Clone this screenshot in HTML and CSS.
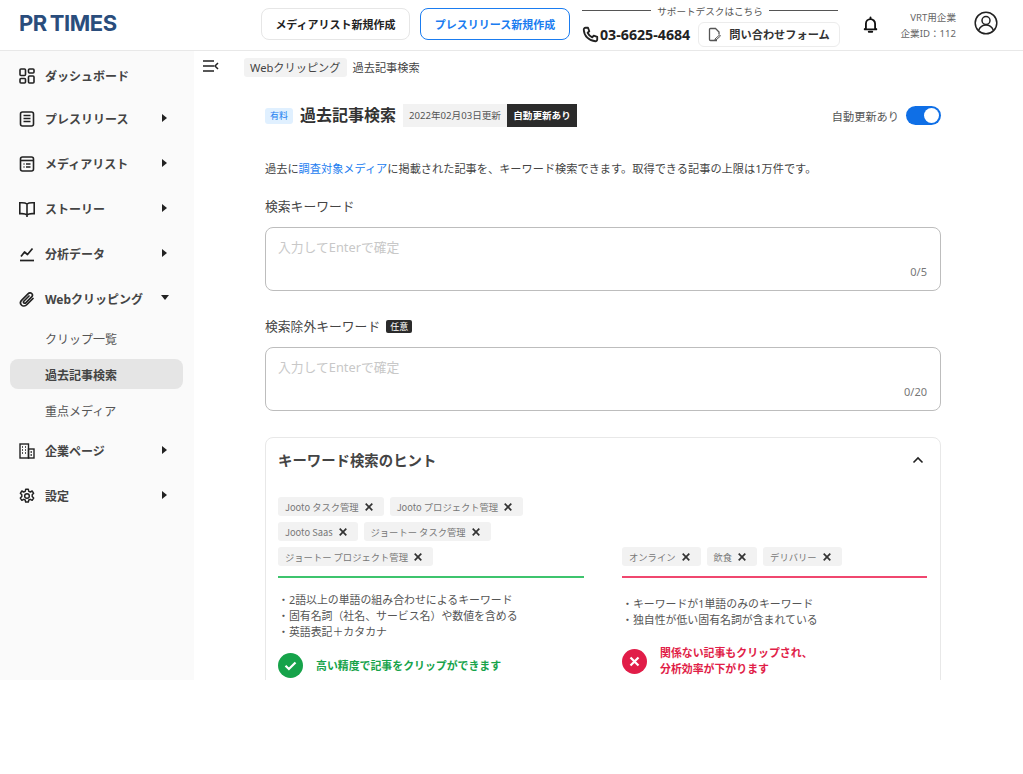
FILE: index.html
```html
<!DOCTYPE html>
<html lang="ja">
<head>
    <meta charset="UTF-8">
    <title>過去記事検索</title>
    <link rel="stylesheet" href="styles.css">
</head>
<body>
<div class="app">
    <header class="header">
        <div class="logo">PR TIMES</div>
        <a class="head-btn">メディアリスト新規作成</a>
        <a class="head-btn head-btn-blue">プレスリリース新規作成</a>
        <div class="support">
            <div class="support-title"><span>サポートデスクはこちら</span></div>
            <div class="support-row">
                <div class="tel">
                    <svg width="17" height="17" viewBox="0 0 24 24" fill="none" stroke="#222" stroke-width="2.6" stroke-linecap="round" stroke-linejoin="round"><path d="M5 2.5h3.5l1.8 5-2.4 2a14 14 0 0 0 6.6 6.6l2-2.4 5 1.8V19a2.5 2.5 0 0 1-2.7 2.5A17 17 0 0 1 2.5 5.2 2.5 2.5 0 0 1 5 2.5z"/></svg>
                    <span>03-6625-4684</span>
                </div>
                <a class="form-btn">
                    <svg width="14" height="15" viewBox="0 0 14 15" fill="none" stroke="#555" stroke-width="1.3"><path d="M9 13.5H2.5a1 1 0 0 1-1-1v-10a1 1 0 0 1 1-1h5l3.5 3.5v2.5"/><path d="M7 12l4.5-4 1 1-4.5 4H7z" stroke-width="1"/></svg>
                    問い合わせフォーム
                </a>
            </div>
        </div>
        <svg class="bell" width="15" height="18" viewBox="0 0 18 20" fill="none" stroke="#111" stroke-width="2.2" stroke-linejoin="round"><path d="M3.5 14V8.5a5.5 5.5 0 0 1 11 0V14l1.5 1.2H2z"/><path d="M7 18h4" stroke-width="2.4" stroke-linecap="round"/><path d="M9 1v2" stroke-linecap="round"/></svg>
        <div class="company">
            <div>VRT用企業</div>
            <div>企業ID：112</div>
        </div>
        <svg class="user" width="24" height="24" viewBox="0 0 24 24" fill="none" stroke="#222" stroke-width="1.5"><circle cx="12" cy="12" r="10.8"/><circle cx="12" cy="9.5" r="4"/><path d="M4.5 19.5c1.5-3.5 4-5.5 7.5-5.5s6 2 7.5 5.5"/></svg>
    </header>

    <div class="body">
        <nav class="sidebar">
            <a class="nav-item nav-first">
                <svg class="nav-icon" viewBox="0 0 16 16" fill="none" stroke="#222" stroke-width="1.6"><rect x="1" y="1" width="5.5" height="6.5" rx="1"/><rect x="9.5" y="1" width="5.5" height="4" rx="1"/><rect x="1" y="10.5" width="5.5" height="4.5" rx="1"/><rect x="9.5" y="8" width="5.5" height="7" rx="1"/></svg>
                ダッシュボード
            </a>
            <a class="nav-item nav-arrow">
                <svg class="nav-icon" viewBox="0 0 16 16" fill="none" stroke="#222" stroke-width="1.6"><rect x="1.5" y="1" width="13" height="14" rx="2"/><path d="M4.5 4.5h7M4.5 7.5h7M4.5 10.5h7" stroke-width="1.7"/></svg>
                プレスリリース
            </a>
            <a class="nav-item nav-arrow">
                <svg class="nav-icon" viewBox="0 0 16 16" fill="none" stroke="#222" stroke-width="1.6"><rect x="1.5" y="1" width="13" height="14" rx="2"/><path d="M1.5 4.5h13"/><path d="M4.5 8h1M7 8h4.5M4.5 11h1M7 11h4.5" stroke-width="1.4"/></svg>
                メディアリスト
            </a>
            <a class="nav-item nav-arrow">
                <svg class="nav-icon" viewBox="0 0 16 16" fill="none" stroke="#222" stroke-width="1.6"><path d="M8 3C6.5 1.8 4 1.5.8 1.8v10.9c3.2-.3 5.700 0 7.200 1.300 1.500-1.300 4-1.600 7.200-1.300V1.800C12 1.500 9.500 1.800 8 3zM8 3v13"/></svg>
                ストーリー
            </a>
            <a class="nav-item nav-arrow">
                <svg class="nav-icon" viewBox="0 0 16 16" fill="none" stroke="#222" stroke-width="1.7"><path d="M1 14.5h14"/><path d="M2 10.5L5.5 6l3 2.5 5-6" stroke-linejoin="round"/></svg>
                分析データ
            </a>
            <a class="nav-item nav-down">
                <svg class="nav-icon" viewBox="0 0 16 16" fill="none" stroke="#222" stroke-width="1.7" stroke-linecap="round"><path d="M14 7.5l-6 6c-1.8 1.8-4.3 1.8-5.6.5S1.300 10.500 3 8.800l6-6c1.200-1.200 2.800-1.200 3.700-.3s.9 2.500-.3 3.700L6.800 11.800c-.6.600-1.400.6-1.900.1s-.5-1.300.1-1.900L10 5"/></svg>
                Webクリッピング
            </a>
            <a class="sub-item sub-first">クリップ一覧</a>
            <a class="sub-item sub-active">過去記事検索</a>
            <a class="sub-item sub-last">重点メディア</a>
            <a class="nav-item nav-arrow">
                <svg class="nav-icon" viewBox="0 0 16 16" fill="none" stroke="#222" stroke-width="1.4"><rect x="1" y="1" width="8.5" height="14"/><rect x="9.5" y="6" width="5.5" height="9"/><path d="M3 4h1M6 4h1M3 7h1M6 7h1M3 10h1M6 10h1M11.5 9H13M11.5 12H13" stroke-width="1.5"/></svg>
                企業ページ
            </a>
            <a class="nav-item nav-arrow">
                <svg class="nav-icon" viewBox="0 0 24 24" fill="none" stroke="#222" stroke-width="2.2" stroke-linejoin="round"><circle cx="12" cy="12" r="3.5"/><path d="M10 2h4l.7 3 2.3 1 2.7-1.5L22 8l-2.200 2.200v2.600L22 15l-2.300 3.500-2.700-1.500-2.300 1-.7 3h-4l-.7-3-2.300-1-2.700 1.500L2 15l2.200-2.200v-2.600L2 8l2.300-3.500L7 6l2.300-1z"/></svg>
                設定
            </a>
        </nav>

        <main class="main">
            <div class="crumbs">
                <svg class="menu-close" width="16" height="12" viewBox="0 0 16 12" fill="none" stroke="#222" stroke-width="1.5"><path d="M0 1h11M0 6h11M0 11h11"/><path d="M15 3l-3 3 3 3"/></svg>
                <span class="crumb-chip">Webクリッピング</span>
                <span class="crumb-now">過去記事検索</span>
            </div>

            <div class="content">
                <div class="title-row">
                    <span class="paid">有料</span>
                    <h1 class="title">過去記事検索</h1>
                    <span class="date-chip">2022年02月03日更新</span>
                    <span class="auto-chip">自動更新あり</span>
                    <span class="toggle-label">自動更新あり</span>
                    <span class="toggle"></span>
                </div>

                <p class="lead">過去に<a class="link">調査対象メディア</a>に掲載された記事を、キーワード検索できます。取得できる記事の上限は1万件です。</p>

                <div class="field-label">検索キーワード</div>
                <div class="input-box">
                    <span class="placeholder">入力してEnterで確定</span>
                    <span class="count">0/5</span>
                </div>

                <div class="field-label field-second">検索除外キーワード<span class="optional">任意</span></div>
                <div class="input-box">
                    <span class="placeholder">入力してEnterで確定</span>
                    <span class="count">0/20</span>
                </div>

                <section class="hint">
                    <div class="hint-head">
                        <h2>キーワード検索のヒント</h2>
                        <svg width="12" height="8" viewBox="0 0 12 8" fill="none" stroke="#222" stroke-width="1.6"><path d="M1.5 6.5L6 2l4.5 4.5"/></svg>
                    </div>
                    <div class="hint-cols">
                        <div class="hint-col">
                            <div class="tags">
                                <span class="tag">Jooto タスク管理<svg class="x" viewBox="0 0 8 8"><path d="M.7.7l6.6 6.6M7.3.7L.7 7.3"/></svg></span>
                                <span class="tag">Jooto プロジェクト管理<svg class="x" viewBox="0 0 8 8"><path d="M.7.7l6.6 6.6M7.3.7L.7 7.3"/></svg></span>
                                <span class="tag">Jooto Saas<svg class="x" viewBox="0 0 8 8"><path d="M.7.7l6.6 6.6M7.3.7L.7 7.3"/></svg></span>
                                <span class="tag">ジョートー タスク管理<svg class="x" viewBox="0 0 8 8"><path d="M.7.7l6.6 6.6M7.3.7L.7 7.3"/></svg></span>
                                <span class="tag">ジョートー プロジェクト管理<svg class="x" viewBox="0 0 8 8"><path d="M.7.7l6.6 6.6M7.3.7L.7 7.3"/></svg></span>
                            </div>
                            <ul class="points points-good">
                                <li>2語以上の単語の組み合わせによるキーワード</li>
                                <li>固有名詞（社名、サービス名）や数値を含める</li>
                                <li>英語表記＋カタカナ</li>
                            </ul>
                            <div class="result result-good">
                                <svg width="25" height="25" viewBox="0 0 25 25"><circle cx="12.5" cy="12.5" r="12.5" fill="#16a34a"/><path d="M7.5 12.8l3.400 3.200 6.600-6.500" fill="none" stroke="#fff" stroke-width="2.2"/></svg>
                                <span>高い精度で記事をクリップができます</span>
                            </div>
                        </div>
                        <div class="hint-col">
                            <div class="tags tags-bad">
                                <span class="tag">オンライン<svg class="x" viewBox="0 0 8 8"><path d="M.7.7l6.6 6.6M7.3.7L.7 7.3"/></svg></span>
                                <span class="tag">飲食<svg class="x" viewBox="0 0 8 8"><path d="M.7.7l6.6 6.6M7.3.7L.7 7.3"/></svg></span>
                                <span class="tag">デリバリー<svg class="x" viewBox="0 0 8 8"><path d="M.7.7l6.6 6.6M7.3.7L.7 7.3"/></svg></span>
                            </div>
                            <ul class="points points-bad">
                                <li>キーワードが1単語のみのキーワード</li>
                                <li>独自性が低い固有名詞が含まれている</li>
                            </ul>
                            <div class="result result-bad">
                                <svg width="25" height="25" viewBox="0 0 25 25"><circle cx="12.5" cy="12.5" r="12.5" fill="#e11d48"/><path d="M8.5 8.5l8 8M16.5 8.5l-8 8" fill="none" stroke="#fff" stroke-width="2.2"/></svg>
                                <span>関係ない記事もクリップされ、<br>分析効率が下がります</span>
                            </div>
                        </div>
                    </div>
                </section>
            </div>
        </main>
    </div>
</div>
</body>
</html>
```

FILE: styles.css
```css
* {
    box-sizing: border-box;
}
html, body {
    margin: 0;
    background-color: #fff;
}
body {
    font-family: "Noto Sans", "Noto Sans CJK JP", sans-serif;
    color: #444;
}
.app {
    height: 680px;
    overflow: hidden;
    display: flex;
    flex-direction: column;
}

/* header */
.header {
    height: 51px;
    flex: none;
    display: flex;
    align-items: center;
    border-bottom: 1px solid #e8e8e8;
    padding-left: 19px;
}
.logo {
    width: 242px;
    font-family: "Inter", sans-serif;
    font-size: 22px;
    font-weight: 700;
    letter-spacing: -0.4px;
    word-spacing: -2px;
    color: #2a4d7c;
    margin-bottom: 5px;
}
.head-btn {
    width: 149px;
    height: 32px;
    display: flex;
    align-items: center;
    justify-content: center;
    border: 1px solid #e6e6e6;
    border-radius: 8px;
    font-size: 11px;
    font-weight: 700;
    color: #222;
    margin-right: 10px;
    margin-bottom: 3px;
}
.head-btn-blue {
    width: 150px;
    border-color: #1a7cf0;
    color: #1a7cf0;
    margin-right: 12px;
}
.support {
    width: 258px;
    display: flex;
    flex-direction: column;
    margin-top: -1px;
}
.support-title {
    width: 256px;
    height: 16px;
    display: flex;
    align-items: center;
    font-size: 9.6px;
    color: #555;
}
.support-title::before, .support-title::after {
    content: "";
    flex: 1;
    border-top: 1px solid #555;
}
.support-title span {
    padding: 0 6px;
}
.support-row {
    display: flex;
    align-items: center;
    justify-content: space-between;
    height: 25px;
    margin-top: 3px;
}
.tel {
    display: flex;
    align-items: center;
    font-size: 14.2px;
    font-weight: 700;
    color: #222;
    gap: 1px;
}
.form-btn {
    width: 142px;
    height: 25px;
    display: flex;
    align-items: center;
    justify-content: center;
    gap: 7px;
    border: 1px solid #ececec;
    border-radius: 6px;
    font-size: 11.2px;
    font-weight: 700;
    color: #333;
}
.bell {
    margin-left: 23px;
}
.company {
    width: 70px;
    margin-left: 8px;
    text-align: right;
    font-size: 9.6px;
    line-height: 16px;
    color: #666;
    margin-top: 2px;
}
.user {
    margin-left: 18px;
    margin-bottom: 5px;
}

.body {
    flex: 1;
    display: flex;
    min-height: 0;
}

/* sidebar */
.sidebar {
    width: 194px;
    flex: none;
    background-color: #fafafa;
    padding: 0 11px 0 10px;
    display: flex;
    flex-direction: column;
}
.nav-item {
    height: 45px;
    flex: none;
    position: relative;
    display: flex;
    align-items: center;
    padding-left: 9px;
    font-size: 12px;
    font-weight: 700;
    color: #444;
}
.nav-first {
    height: 41px;
    margin-top: 4px;
}
.nav-icon {
    width: 16px;
    height: 16px;
    margin-right: 10px;
    flex: none;
}
.nav-arrow::after {
    content: "";
    position: absolute;
    left: 152px;
    top: 18px;
    border-left: 5px solid #222;
    border-top: 4px solid transparent;
    border-bottom: 4px solid transparent;
}
.nav-down::after {
    content: "";
    position: absolute;
    left: 151px;
    top: 19px;
    border-top: 5px solid #222;
    border-left: 4px solid transparent;
    border-right: 4px solid transparent;
}
.sub-item {
    height: 30px;
    flex: none;
    margin-bottom: 6px;
    display: flex;
    align-items: center;
    padding-left: 35px;
    padding-top: 1px;
    border-radius: 8px;
    font-size: 12px;
    color: #555;
}
.sub-first {
    margin-top: 2px;
}
.sub-last {
    margin-bottom: 3px;
}
.sub-active {
    background-color: #e5e5e5;
    font-weight: 700;
    color: #444;
}

/* main */
.main {
    flex: 1;
    min-width: 0;
    padding-left: 9px;
}
.crumbs {
    height: 37px;
    padding-top: 7px;
    display: flex;
    align-items: flex-start;
    font-size: 11.2px;
    color: #444;
}
.menu-close {
    margin-top: 2px;
    margin-right: 25px;
}
.crumb-chip {
    height: 19px;
    line-height: 20px;
    padding: 0 6px;
    background-color: #f2f2f2;
    border-radius: 3px;
}
.crumb-now {
    margin-left: 6px;
    line-height: 20px;
}
.content {
    width: 676px;
    margin-left: 62px;
    padding-top: 16px;
}
.title-row {
    height: 23px;
    display: flex;
    align-items: center;
}
.paid {
    width: 28px;
    height: 16px;
    line-height: 16px;
    text-align: center;
    background-color: #e0f0ff;
    border-radius: 3px;
    font-size: 9px;
    color: #1a7cf0;
}
.title {
    margin: 0 7px;
    font-size: 16px;
    line-height: 23px;
    font-weight: 700;
    color: #333;
}
.date-chip {
    width: 104px;
    height: 23px;
    line-height: 23px;
    text-align: center;
    background-color: #f2f2f2;
    font-size: 9.6px;
    color: #555;
}
.auto-chip {
    width: 70px;
    height: 23px;
    line-height: 23px;
    text-align: center;
    background-color: #2b2b2b;
    font-size: 9.6px;
    font-weight: 700;
    color: #fff;
}
.toggle-label {
    margin-left: auto;
    font-size: 11.2px;
    color: #555;
    margin-right: 7px;
}
.toggle {
    width: 35px;
    height: 19px;
    position: relative;
    background-color: #0f6fe6;
    border-radius: 10px;
}
.toggle::after {
    content: "";
    position: absolute;
    right: 2px;
    top: 2px;
    width: 15px;
    height: 15px;
    background-color: #fff;
    border-radius: 50%;
}
.lead {
    margin: 33px 0 0;
    font-size: 11.2px;
    line-height: 18px;
    color: #444;
}
.link {
    color: #1a7cf0;
}
.field-label {
    margin-top: 18px;
    font-size: 12.8px;
    line-height: 20px;
    color: #444;
    display: flex;
    align-items: center;
}
.field-second {
    margin-top: 25px;
}
.optional {
    margin-left: 6px;
    width: 26px;
    height: 13px;
    line-height: 13px;
    text-align: center;
    background-color: #2b2b2b;
    border-radius: 2px;
    font-size: 9px;
    color: #fff;
}
.input-box {
    margin-top: 11px;
    height: 64px;
    position: relative;
    border: 1px solid #bdbdbd;
    border-radius: 8px;
    padding: 7px 12px;
}
.placeholder {
    font-size: 12.8px;
    line-height: 20px;
    color: #c8c8c8;
}
.count {
    position: absolute;
    right: 13px;
    bottom: 11px;
    font-size: 11px;
    color: #777;
}

/* hint card */
.hint {
    margin-top: 26px;
    border: 1px solid #e8e8e8;
    border-radius: 8px;
    padding: 0 13px 0 12px;
    height: 300px;
}
.hint-head {
    height: 43px;
    display: flex;
    align-items: center;
    justify-content: space-between;
    padding-right: 3px;
}
.hint-head h2 {
    margin: 0;
    font-size: 14.4px;
    font-weight: 700;
    color: #444;
}
.hint-cols {
    margin-top: 17px;
    display: grid;
    grid-template-columns: 306px 305px;
    column-gap: 38px;
}
.tags {
    height: 80px;
    display: flex;
    flex-wrap: wrap;
    align-content: flex-end;
    gap: 6px;
    border-bottom: 2px solid #3ec46d;
    padding-bottom: 10px;
}
.tags-bad {
    border-bottom-color: #f0476f;
}
.tag {
    height: 19px;
    display: flex;
    align-items: center;
    padding: 0 11px 0 7px;
    background-color: #f2f2f2;
    border-radius: 3px;
    font-family: "Noto Sans CJK JP", sans-serif;
    font-size: 9.3px;
    color: #777;
}
.x {
    width: 8px;
    height: 8px;
    margin-left: 6px;
    fill: none;
    stroke: #333;
    stroke-width: 1.7;
}
.points {
    margin: 0;
    padding: 0;
    list-style: none;
    font-size: 10.9px;
    line-height: 16px;
    color: #555;
}
.points li::before {
    content: "・";
}
.points-good {
    margin-top: 14px;
    height: 48px;
}
.points-bad {
    margin-top: 18px;
    height: 32px;
}
.result {
    display: flex;
    align-items: center;
    gap: 13px;
    font-size: 10.9px;
    line-height: 16px;
    font-weight: 700;
}
.result svg {
    flex: none;
}
.result-good {
    margin-top: 13px;
    color: #16a34a;
}
.result-bad {
    margin-top: 17px;
    color: #e11d48;
}
```
